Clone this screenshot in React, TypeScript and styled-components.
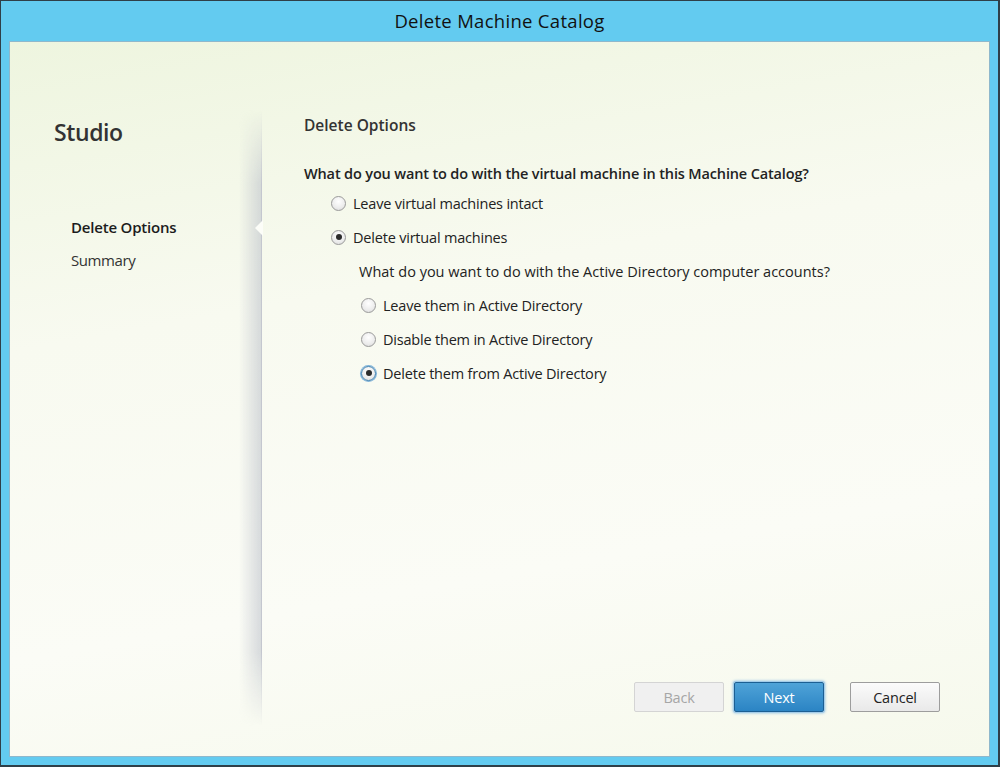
import React from "react";
import styled, { createGlobalStyle } from "styled-components";

const Global = createGlobalStyle`
  html, body { margin: 0; padding: 0; }
  body { width: 1000px; height: 767px; overflow: hidden; font-family: "Open Sans", "Noto Sans", sans-serif; color: #222; }
  #root { width: 1000px; height: 767px; }
`;

const Window = styled.div`
  box-sizing: border-box;
  width: 1000px;
  height: 767px;
  background: #63cbf0;
  border: 1px solid #2f3f48;
  border-bottom-width: 2px;
  border-right-width: 2px;
  display: flex;
  flex-direction: column;
  padding: 0 8px 8px 8px;
`;

const TitleBar = styled.div`
  height: 39px;
  display: flex;
  align-items: center;
  justify-content: center;
  padding-bottom: 1px;
  font-size: 18.5px;
  color: #111;
  letter-spacing: 0.3px;
`;

const Body = styled.div`
  flex: 1;
  display: flex;
  border: 1px solid #8fb8cc;
  background: linear-gradient(170deg, #eef5df 0%, #f8faf0 35%, #fbfcf6 70%, #f6f9ec 100%);
  min-height: 0;
`;

const Sidebar = styled.div`
  position: relative;
  width: 252px;
  flex-shrink: 0;
  display: flex;
  flex-direction: column;
  padding: 74px 0 0 44px;
  box-sizing: border-box;
`;

const Shade = styled.div`
  position: absolute;
  top: 68px;
  bottom: 30px;
  right: 0;
  width: 22px;
  background: linear-gradient(90deg, rgba(200,205,215,0) 0%, rgba(185,190,200,0.55) 100%);
  border-right: 1px solid #c4c7cf;
  -webkit-mask-image: linear-gradient(180deg, transparent 0%, #000 12%, #000 88%, transparent 100%);
  mask-image: linear-gradient(180deg, transparent 0%, #000 12%, #000 88%, transparent 100%);
`;

const Notch = styled.div`
  position: absolute;
  right: -1px;
  top: 178px;
  width: 0;
  height: 0;
  border-top: 8px solid transparent;
  border-bottom: 8px solid transparent;
  border-right: 8px solid #fcfdf8;
`;

const Brand = styled.div`
  font-size: 23px;
  color: #333;
  font-weight: 600;
  letter-spacing: -0.4px;
  margin-bottom: 69px;
`;

const NavItem = styled.div<{ $active?: boolean }>`
  font-size: 15px;
  font-weight: ${p => (p.$active ? 600 : 400)};
  color: ${p => (p.$active ? "#1c1c1c" : "#333")};
  margin-left: 17px;
  height: 33px;
  letter-spacing: ${p => (p.$active ? "-0.2px" : "-0.4px")};
`;

const Main = styled.div`
  flex: 1;
  display: flex;
  flex-direction: column;
  padding: 72px 0 0 42px;
  box-sizing: border-box;
`;

const SectionTitle = styled.div`
  font-size: 15.5px;
  font-weight: 600;
  color: #333;
  letter-spacing: 0;
  margin-bottom: 28px;
`;

const Question = styled.div<{ $sub?: boolean }>`
  font-size: 14.5px;
  font-weight: ${p => (p.$sub ? 400 : 600)};
  color: #222;
  letter-spacing: ${p => (p.$sub ? "0" : "-0.15px")};
  margin-left: ${p => (p.$sub ? "55px" : "0")};
  height: ${p => (p.$sub ? "34px" : "30px")};
`;

const Options = styled.div<{ $indent: number }>`
  display: flex;
  flex-direction: column;
  margin-left: ${p => p.$indent}px;
`;

const OptionRow = styled.label`
  display: flex;
  align-items: center;
  gap: 7px;
  height: 34px;
  font-size: 14.5px;
  color: #222;
  letter-spacing: -0.2px;
  margin-top: -8px;
  margin-bottom: 8px;
`;

const Circle = styled.span<{ $checked?: boolean; $focus?: boolean }>`
  box-sizing: border-box;
  width: 15px;
  height: 15px;
  border-radius: 50%;
  border: 1px solid ${p => (p.$focus ? "#3c7fb1" : "#9a9a9a")};
  background: radial-gradient(circle at 50% 35%, #ffffff 0%, #ececec 60%, #d6d6d6 100%);
  display: flex;
  align-items: center;
  justify-content: center;
  box-shadow: ${p => (p.$focus ? "0 0 0 1px #7fb3da" : "none")};
  &::after {
    content: "";
    display: ${p => (p.$checked ? "block" : "none")};
    width: 6px;
    height: 6px;
    border-radius: 50%;
    background: #2b2b2b;
  }
`;

const Spacer = styled.div`
  flex: 1;
`;

const Footer = styled.div`
  display: flex;
  gap: 10px;
  margin-left: 330px;
  margin-bottom: 44px;
`;

const Button = styled.button<{ $variant?: "primary" | "disabled" | "normal"; $gapLeft?: number }>`
  box-sizing: border-box;
  width: 90px;
  height: 30px;
  margin-left: ${p => p.$gapLeft ?? 0}px;
  font-family: inherit;
  font-size: 14.5px;
  letter-spacing: -0.2px;
  border-radius: 2px;
  cursor: default;
  ${p =>
    p.$variant === "primary"
      ? `
    color: #fff;
    background: linear-gradient(180deg, #4fa3d8 0%, #2b84c4 100%);
    border: 1px solid #1c5f93;
    box-shadow: 0 0 0 1px #a5cde9, 0 0 3px 1px #7fb8e0;
  `
      : p.$variant === "disabled"
      ? `
    color: #a6a6a6;
    background: #f0f0f0;
    border: 1px solid #d4d4d4;
  `
      : `
    color: #222;
    background: linear-gradient(180deg, #fbfbfb 0%, #e9e9e9 100%);
    border: 1px solid #9d9d9d;
  `}
`;

type Opt = { label: string; checked?: boolean; focus?: boolean };

const Radio: React.FC<Opt> = ({ label, checked, focus }) => (
  <OptionRow>
    <Circle $checked={checked} $focus={focus} />
    <span>{label}</span>
  </OptionRow>
);

export default function App() {
  const vmOptions: Opt[] = [
    { label: "Leave virtual machines intact" },
    { label: "Delete virtual machines", checked: true },
  ];
  const adOptions: Opt[] = [
    { label: "Leave them in Active Directory" },
    { label: "Disable them in Active Directory" },
    { label: "Delete them from Active Directory", checked: true, focus: true },
  ];
  return (
    <>
      <Global />
      <Window>
        <TitleBar>Delete Machine Catalog</TitleBar>
        <Body>
          <Sidebar>
            <Shade />
            <Notch />
            <Brand>Studio</Brand>
            <NavItem $active>Delete Options</NavItem>
            <NavItem>Summary</NavItem>
          </Sidebar>
          <Main>
            <SectionTitle>Delete Options</SectionTitle>
            <Question>What do you want to do with the virtual machine in this Machine Catalog?</Question>
            <Options $indent={27}>
              {vmOptions.map(o => (
                <Radio key={o.label} {...o} />
              ))}
            </Options>
            <Question $sub>What do you want to do with the Active Directory computer accounts?</Question>
            <Options $indent={57}>
              {adOptions.map(o => (
                <Radio key={o.label} {...o} />
              ))}
            </Options>
            <Spacer />
            <Footer>
              <Button $variant="disabled">Back</Button>
              <Button $variant="primary">Next</Button>
              <Button $gapLeft={16}>Cancel</Button>
            </Footer>
          </Main>
        </Body>
      </Window>
    </>
  );
}
